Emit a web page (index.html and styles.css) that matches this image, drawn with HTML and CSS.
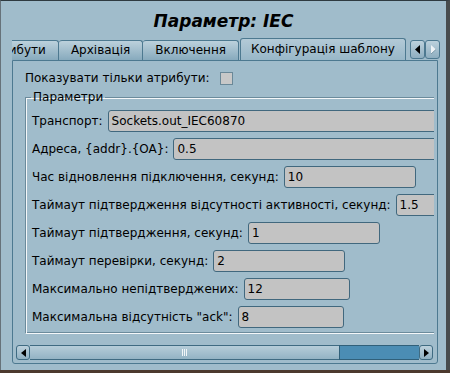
FILE: index.html
```html
<!DOCTYPE html>
<html lang="uk">
<head>
    <meta charset="UTF-8">
    <title>Параметр: IEC</title>
    <link rel="stylesheet" href="styles.css">
</head>
<body>
    <div class="window">
        <h1 class="title">Параметр: IEC</h1>

        <div class="tabbar">
            <div class="tabs">
                <div class="tab tab-first">Атрибути</div>
                <div class="tab">Архівація</div>
                <div class="tab">Включення</div>
                <div class="tab active">Конфігурація шаблону</div>
            </div>
            <div class="tab-arrows">
                <span class="arrow-btn">
                    <svg width="6" height="9" viewBox="0 0 6 9"><path d="M5 0 L0 4.5 L5 9 Z" fill="#000"/></svg>
                </span>
                <span class="arrow-btn off">
                    <svg width="6" height="9" viewBox="0 0 6 9"><path d="M1 0 L6 4.5 L1 9 Z" fill="#eef3f6"/><path d="M1 9 L6 4.5" stroke="#7a98a8" stroke-width="1"/></svg>
                </span>
            </div>
        </div>

        <div class="pane">
            <div class="viewport">
                <div class="content">
                    <div class="check-row">
                        <span>Показувати тільки атрибути:</span>
                        <span class="checkbox"></span>
                    </div>

                    <fieldset class="group">
                        <legend>Параметри</legend>
                        <div class="row">
                            <label>Транспорт:</label>
                            <div class="field grow">Sockets.out_IEC60870</div>
                        </div>
                        <div class="row">
                            <label>Адреса, {addr}.{OA}:</label>
                            <div class="field grow">0.5</div>
                        </div>
                        <div class="row">
                            <label>Час відновлення підключення, секунд:</label>
                            <div class="field mid">10</div>
                        </div>
                        <div class="row">
                            <label>Таймаут підтвердження відсутності активності, секунд:</label>
                            <div class="field mid">1.5</div>
                        </div>
                        <div class="row">
                            <label>Таймаут підтвердження, секунд:</label>
                            <div class="field mid">1</div>
                        </div>
                        <div class="row">
                            <label>Таймаут перевірки, секунд:</label>
                            <div class="field mid">2</div>
                        </div>
                        <div class="row">
                            <label>Максимально непідтверджених:</label>
                            <div class="field short">12</div>
                        </div>
                        <div class="row">
                            <label>Максимальна відсутність "ack":</label>
                            <div class="field short">8</div>
                        </div>
                    </fieldset>
                </div>
            </div>

            <div class="hscroll">
                <span class="sb-btn">
                    <svg width="5" height="8" viewBox="0 0 5 8"><path d="M5 0 L0 4 L5 8 Z" fill="#000"/></svg>
                </span>
                <span class="sb-thumb"><span class="grip"></span></span>
                <span class="sb-trough"></span>
                <span class="sb-btn">
                    <svg width="5" height="8" viewBox="0 0 5 8"><path d="M0 0 L5 4 L0 8 Z" fill="#000"/></svg>
                </span>
            </div>
        </div>
    </div>
</body>
</html>
```

FILE: styles.css
```css
body {
    margin: 0;
    background-color: #4d3a2e;
    font-family: "DejaVu Sans", sans-serif;
    font-size: 12px;
    color: #000;
}
.window {
    width: 450px;
    height: 370px;
    box-sizing: border-box;
    background-color: #a0bccb;
    border-top: 1px solid #2e3a40;
    border-left: 1px solid #66727a;
    border-right: 4px solid #474b4d;
    overflow: hidden;
}
.title {
    margin: 0;
    height: 37px;
    box-sizing: border-box;
    padding-top: 10px;
    font-size: 17px;
    line-height: 20px;
    font-style: italic;
    font-weight: bold;
    text-align: center;
}
.tabbar {
    display: flex;
    align-items: flex-end;
    height: 22px;
    margin-left: 11px;
}
.tabs {
    display: flex;
    align-items: flex-end;
    width: 397px;
    height: 22px;
    overflow: hidden;
}
.tab {
    flex: none;
    height: 20px;
    box-sizing: border-box;
    padding: 0 12px;
    line-height: 19px;
    white-space: nowrap;
    background: linear-gradient(#bcd1dc, #87aabd);
    border: 1px solid #4d7990;
    border-bottom: none;
    border-left: none;
    border-radius: 3px 3px 0 0;
}
.tab-first {
    margin-left: -38px;
}
.tab.active {
    height: 22px;
    line-height: 21px;
    padding: 0 10px;
    margin-left: 1px;
    border-left: 1px solid #4d7990;
    background: linear-gradient(#b3cad7, #98b7c8);
}
.tab-arrows {
    display: flex;
    margin-left: 1px;
    margin-bottom: 1px;
}
.arrow-btn {
    display: flex;
    align-items: center;
    justify-content: center;
    width: 15px;
    height: 19px;
    box-sizing: border-box;
    border: 1px solid #4d7990;
    border-radius: 3px;
    background: linear-gradient(#bcd1dc, #8eaec0);
}
.pane {
    width: 426px;
    height: 304px;
    margin-left: 11px;
    box-sizing: border-box;
    border: 1px solid #4d7990;
    border-radius: 0 0 3px 3px;
}
.viewport {
    width: 421px;
    height: 282px;
    overflow: hidden;
}
.content {
    width: 540px;
}
.check-row {
    display: flex;
    align-items: center;
    gap: 10px;
    height: 14px;
    padding: 10px 0 0 12px;
}
.checkbox {
    width: 13px;
    height: 13px;
    box-sizing: border-box;
    background-color: #c8c8c8;
    border: 1px solid #6a8898;
}
.group {
    width: 510px;
    margin: 5px 0 0 12px;
    padding: 6px 6px 5px 6px;
    box-sizing: border-box;
    border: 1px solid #6b8b9c;
    border-right-color: #f4f7f9;
    border-bottom-color: #f4f7f9;
    box-shadow: inset 1px 1px 0 #f4f7f9, inset -1px -1px 0 #6b8b9c;
}
.group legend {
    padding: 0 2px;
    margin-left: -1px;
    line-height: 14px;
}
.row {
    display: flex;
    align-items: center;
    gap: 5px;
    height: 22px;
    margin-top: 6px;
    white-space: nowrap;
}
.row:first-of-type {
    margin-top: 0;
}
.field {
    flex: none;
    height: 22px;
    box-sizing: border-box;
    padding: 0 3px;
    line-height: 20px;
    background-color: #c3c3c3;
    border: 1px solid #41687e;
    border-radius: 3px;
}
.field.grow {
    flex: 1;
}
.field.mid {
    width: 132px;
}
.field.short {
    width: 106px;
}
.hscroll {
    display: flex;
    width: 417px;
    height: 15px;
    margin: 2px 0 0 3px;
}
.sb-btn {
    display: flex;
    align-items: center;
    justify-content: center;
    width: 14px;
    box-sizing: border-box;
    border: 1px solid #3f6b82;
    border-radius: 3px;
    background: linear-gradient(#bcd1dc, #90b0c2);
}
.sb-thumb {
    display: flex;
    align-items: center;
    justify-content: center;
    width: 309px;
    box-sizing: border-box;
    border-top: 1px solid #3f6b82;
    border-bottom: 1px solid #3f6b82;
    background: linear-gradient(#b6cdd9, #93b3c4);
}
.grip {
    width: 5px;
    height: 7px;
    background: repeating-linear-gradient(90deg, #f2f6f8 0 1px, transparent 1px 2px);
}
.sb-trough {
    flex: 1;
    box-sizing: border-box;
    background-color: #4b8db4;
    border: 1px solid #30607a;
    border-right: none;
}
```
